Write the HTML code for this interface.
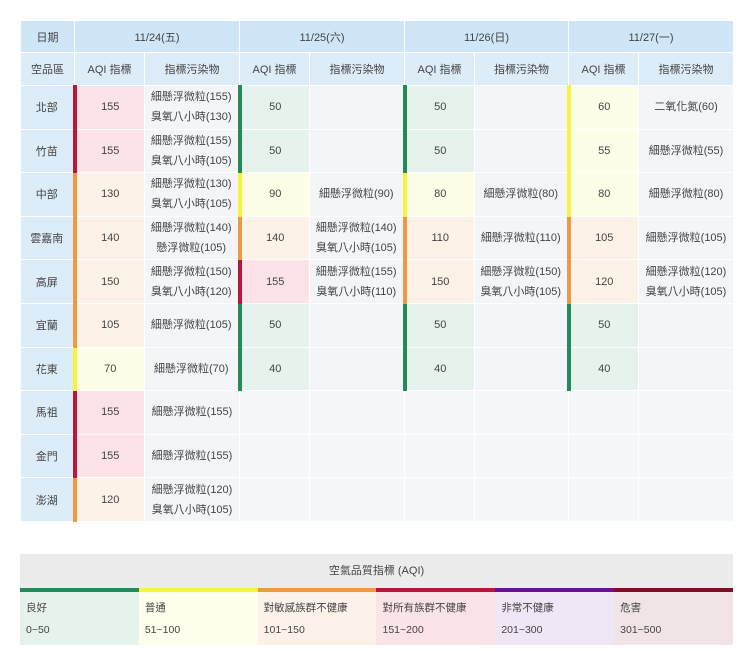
<!DOCTYPE html>
<html><head><meta charset="utf-8"><style>
body{margin:0;background:#fff;width:750px;height:651px;overflow:hidden;font-family:"Liberation Sans","Noto Sans CJK TC",sans-serif;color:#444;}
table{position:absolute;left:20px;top:20px;border-collapse:collapse;table-layout:fixed;}
td{border:1px solid #fff;text-align:center;font-size:11px;padding:0;}
.h td{background:#cfe6f8;height:31px;}
.s td{background:#dcecf9;height:32px;}
.r td{height:42.6px;}
td.reg{background:#dcecf9;}
td.p{background:#f3f5f9;line-height:20px;font-size:11px;}
td.e{background:#f5f7fa;}
td.a{border-left:4px solid;}
.R{background:#fbe3e7;border-left-color:#b8163a!important}
.O{background:#fdf2e8;border-left-color:#ee9a44!important}
.Y{background:#fefee8;border-left-color:#f5f53a!important}
.G{background:#e5f3ec;border-left-color:#238a58!important}
.leg{position:absolute;left:20px;top:554px;width:713px;}
.lh{background:#ececec;height:34px;line-height:34px;text-align:center;font-size:11px;}
.lc{display:flex;}
.lc div{flex:1;border-top:4px solid;font-size:10.5px;padding-left:6px;line-height:22px;padding-top:5px;box-sizing:border-box;height:57px;}
</style></head><body>
<table>
<colgroup><col style="width:54px"><col style="width:70px"><col style="width:95px"><col style="width:70px"><col style="width:95px"><col style="width:70px"><col style="width:94px"><col style="width:70px"><col style="width:95px"></colgroup>
<tr class="h"><td>日期</td><td colspan="2">11/24(五)</td><td colspan="2">11/25(六)</td><td colspan="2">11/26(日)</td><td colspan="2">11/27(一)</td></tr>
<tr class="s"><td>空品區</td><td>AQI 指標</td><td>指標污染物</td><td>AQI 指標</td><td>指標污染物</td><td>AQI 指標</td><td>指標污染物</td><td>AQI 指標</td><td>指標污染物</td></tr>
<tr class="r"><td class="reg">北部</td><td class="a R">155</td><td class="p">細懸浮微粒(155)<br>臭氧八小時(130)</td><td class="a G">50</td><td class="p"></td><td class="a G">50</td><td class="p"></td><td class="a Y">60</td><td class="p">二氧化氮(60)</td></tr>
<tr class="r"><td class="reg">竹苗</td><td class="a R">155</td><td class="p">細懸浮微粒(155)<br>臭氧八小時(105)</td><td class="a G">50</td><td class="p"></td><td class="a G">50</td><td class="p"></td><td class="a Y">55</td><td class="p">細懸浮微粒(55)</td></tr>
<tr class="r"><td class="reg">中部</td><td class="a O">130</td><td class="p">細懸浮微粒(130)<br>臭氧八小時(105)</td><td class="a Y">90</td><td class="p">細懸浮微粒(90)</td><td class="a Y">80</td><td class="p">細懸浮微粒(80)</td><td class="a Y">80</td><td class="p">細懸浮微粒(80)</td></tr>
<tr class="r"><td class="reg">雲嘉南</td><td class="a O">140</td><td class="p">細懸浮微粒(140)<br>懸浮微粒(105)</td><td class="a O">140</td><td class="p">細懸浮微粒(140)<br>臭氧八小時(105)</td><td class="a O">110</td><td class="p">細懸浮微粒(110)</td><td class="a O">105</td><td class="p">細懸浮微粒(105)</td></tr>
<tr class="r"><td class="reg">高屏</td><td class="a O">150</td><td class="p">細懸浮微粒(150)<br>臭氧八小時(120)</td><td class="a R">155</td><td class="p">細懸浮微粒(155)<br>臭氧八小時(110)</td><td class="a O">150</td><td class="p">細懸浮微粒(150)<br>臭氧八小時(105)</td><td class="a O">120</td><td class="p">細懸浮微粒(120)<br>臭氧八小時(105)</td></tr>
<tr class="r"><td class="reg">宜蘭</td><td class="a O">105</td><td class="p">細懸浮微粒(105)</td><td class="a G">50</td><td class="p"></td><td class="a G">50</td><td class="p"></td><td class="a G">50</td><td class="p"></td></tr>
<tr class="r"><td class="reg">花東</td><td class="a Y">70</td><td class="p">細懸浮微粒(70)</td><td class="a G">40</td><td class="p"></td><td class="a G">40</td><td class="p"></td><td class="a G">40</td><td class="p"></td></tr>
<tr class="r"><td class="reg">馬祖</td><td class="a R">155</td><td class="p">細懸浮微粒(155)</td><td class="e"></td><td class="e"></td><td class="e"></td><td class="e"></td><td class="e"></td><td class="e"></td></tr>
<tr class="r"><td class="reg">金門</td><td class="a R">155</td><td class="p">細懸浮微粒(155)</td><td class="e"></td><td class="e"></td><td class="e"></td><td class="e"></td><td class="e"></td><td class="e"></td></tr>
<tr class="r"><td class="reg">澎湖</td><td class="a O">120</td><td class="p">細懸浮微粒(120)<br>臭氧八小時(105)</td><td class="e"></td><td class="e"></td><td class="e"></td><td class="e"></td><td class="e"></td><td class="e"></td></tr>
</table>
<div class="leg">
<div class="lh">空氣品質指標 (AQI)</div>
<div class="lc">
<div style="border-color:#238a58;background:#e6f2ec">良好<br>0~50</div>
<div style="border-color:#f5f53a;background:#fefeec">普通<br>51~100</div>
<div style="border-color:#ee9a44;background:#fdf2e9">對敏感族群不健康<br>101~150</div>
<div style="border-color:#b8163a;background:#fae4e8">對所有族群不健康<br>151~200</div>
<div style="border-color:#6a1190;background:#efe6f6">非常不健康<br>201~300</div>
<div style="border-color:#7e1024;background:#f1e4e7">危害<br>301~500</div>
</div></div>
</body></html>
